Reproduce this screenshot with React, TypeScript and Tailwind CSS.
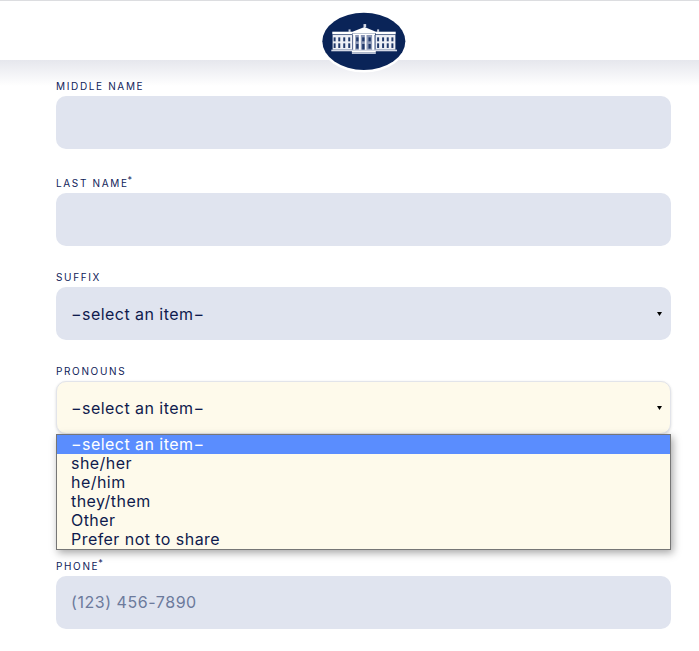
const sans = "font-['Inter','Liberation_Sans',sans-serif]";
const placeholder = "−select an item−";

function Label({ text, required }: { text: string; required?: boolean }) {
    return (
        <div className="h-[10px] flex items-start text-[10px] leading-[10px] tracking-[1.65px] text-[#0f2259] uppercase">
            {text}
            {required && <span className="text-[9px] leading-[8px] -ml-[1px] -mt-[2px] tracking-normal">*</span>}
        </div>
    );
}

function Arrow() {
    return (
        <svg className="w-[5px] h-[4px] shrink-0" viewBox="0 0 5 4">
            <path d="M0 0H5L2.5 4Z" fill="#000" />
        </svg>
    );
}

function Logo() {
    const wingWindows = [104, 118, 133, 148, 235, 250, 264, 278];
    return (
        <svg className="w-[88px] h-[63px]" viewBox="60 28 265 189">
            <ellipse cx="192" cy="122" rx="131" ry="94" fill="#fff" />
            <ellipse cx="192" cy="122" rx="125" ry="86" fill="#0a2458" />
            {/* wings */}
            <rect x="97" y="93" width="60" height="8" fill="#fff" />
            <rect x="228" y="93" width="60" height="8" fill="#fff" />
            <rect x="98" y="103" width="59" height="44" fill="#eef0f6" />
            <rect x="228" y="103" width="59" height="44" fill="#eef0f6" />
            {wingWindows.map((x) => (
                <g key={x} fill="#223a6c">
                    <rect x={x - 3} y="110" width="6" height="12" />
                    <rect x={x - 3} y="128" width="6" height="14" />
                </g>
            ))}
            {/* roof urns */}
            <rect x="146" y="86" width="6" height="8" fill="#c9cfde" />
            <rect x="232" y="86" width="6" height="8" fill="#c9cfde" />
            {/* portico */}
            <path d="M156 94L194 79L230 94V98H156Z" fill="#fff" />
            <rect x="158" y="98" width="68" height="5" fill="#fff" />
            <rect x="158" y="103" width="70" height="48" fill="#8e9ab8" />
            <g fill="#fff">
                <rect x="160" y="103" width="6" height="48" />
                <rect x="177" y="103" width="6" height="48" />
                <rect x="195" y="103" width="5" height="48" />
                <rect x="217" y="103" width="6" height="48" />
            </g>
            <rect x="169" y="110" width="7" height="12" fill="#223a6c" />
            <rect x="187" y="110" width="7" height="12" fill="#223a6c" />
            <rect x="206" y="110" width="7" height="12" fill="#223a6c" />
            <rect x="169" y="130" width="7" height="14" fill="#223a6c" />
            <rect x="187" y="130" width="7" height="18" fill="#223a6c" />
            <rect x="206" y="130" width="7" height="14" fill="#223a6c" />
            {/* flag */}
            <rect x="191" y="70" width="8" height="9" fill="#d5d9e5" />
            {/* base */}
            <rect x="94" y="147" width="198" height="5" fill="#d3d8e5" />
            <rect x="156" y="151" width="72" height="5" fill="#fff" />
            <rect x="156" y="156" width="72" height="4" fill="#c3cadb" />
        </svg>
    );
}

const options = ["she/her", "he/him", "they/them", "Other", "Prefer not to share"];

export default function App() {
    return (
        <div className={`${sans} relative w-full h-[651px] overflow-hidden bg-white`}>
            {/* Header */}
            <div className="h-[60px] bg-white border-t border-[#dcdde0]" />
            <div className="h-[26px] bg-gradient-to-b from-[#e6e7ed] to-white" />
            <div className="absolute top-[10px] left-[320px]">
                <Logo />
            </div>

            {/* Form */}
            <div className="absolute top-[81px] left-[56px] w-[615px] flex flex-col">
                <Label text="Middle Name" />
                <div className="mt-[5px] h-[53px] rounded-[10px] bg-[#e0e4ef]" />

                <div className="mt-[29px]">
                    <Label text="Last Name" required />
                </div>
                <div className="mt-[5px] h-[53px] rounded-[10px] bg-[#e0e4ef]" />

                <div className="mt-[26px]">
                    <Label text="Suffix" />
                </div>
                <div className="mt-[5px] h-[53px] rounded-[10px] bg-[#e0e4ef] flex items-center justify-between pl-[15px] pr-[9px] text-[16px] tracking-[0.45px] text-[#0f1b4d]">
                    <span>{placeholder}</span>
                    <Arrow />
                </div>

                <div className="mt-[26px]">
                    <Label text="Pronouns" />
                </div>
                <div className="relative mt-[5px]">
                    <div className="h-[53px] rounded-[10px] bg-[#fefaeb] border border-[#e2e4ea] shadow-[0_1px_3px_rgba(0,0,0,0.15)] flex items-center justify-between pl-[14px] pr-[8px] text-[16px] tracking-[0.45px] text-[#0f1b4d]">
                        <span>{placeholder}</span>
                        <Arrow />
                    </div>
                    {/* Open dropdown list */}
                    <div className="absolute z-10 top-[53px] left-0 w-full border border-[#767676] bg-[#fefaeb] shadow-[2px_3px_8px_rgba(0,0,0,0.35)] text-[16px] leading-[18px] tracking-[0.45px] text-[#0f1b4d]">
                        <div className="h-[19px] pl-[14px] bg-[#5a8dfe] text-white">{placeholder}</div>
                        {options.map((o) => (
                            <div key={o} className="h-[19px] pl-[14px]">{o}</div>
                        ))}
                    </div>
                </div>

                <div className="mt-[127px]">
                    <Label text="Phone" required />
                </div>
                <div className="mt-[5px] h-[53px] pb-[2px] rounded-[10px] bg-[#e0e4ef] flex items-center pl-[15px] text-[16px] tracking-[0.55px] text-[#6c7a9c]">
                    (123) 456-7890
                </div>
            </div>
        </div>
    );
}
